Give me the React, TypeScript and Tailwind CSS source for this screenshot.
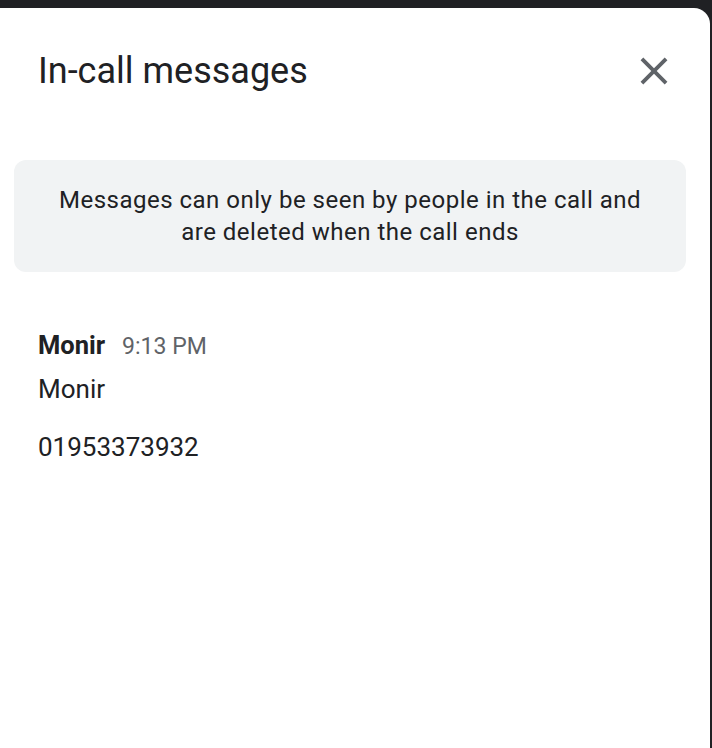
const CloseIcon = () => (
  <svg width="46" height="46" viewBox="0 0 24 24" fill="#5f6368">
    <path d="M19 6.41L17.59 5 12 10.59 6.41 5 5 6.41 10.59 12 5 17.59 6.41 19 12 13.41 17.59 19 19 17.59 13.41 12z" />
  </svg>
);

export default function App() {
  return (
    <div className="h-[748px] w-[712px] overflow-hidden bg-[#202124] pt-2 font-['Roboto',sans-serif]">
      <div className="flex h-[740px] w-[710px] flex-col rounded-tr-[16px] bg-white">
        {/* header */}
        <div className="flex h-[126px] items-center justify-between pl-[38px] pr-[33px]">
          <h1 className="text-[36px] leading-[44px] text-[#202124]">In-call messages</h1>
          <button className="flex items-center justify-center">
            <CloseIcon />
          </button>
        </div>

        <div className="ml-[14px] mr-[24px] mt-[26px] rounded-[12px] bg-[#f1f3f4] py-6 text-center text-[24px] leading-[32px] tracking-[0.5px] text-[#202124]">
          Messages can only be seen by people in the call and
          <br />
          are deleted when the call ends
        </div>

        {/* messages */}
        <div className="mt-[58px] px-[38px]">
          <div className="flex items-baseline gap-[17px] leading-[30px]">
            <span className="text-[25.5px] font-bold text-[#202124]">Monir</span>
            <span className="text-[23px] text-[#5f6368]">9:13 PM</span>
          </div>
          <p className="mt-[12px] text-[26px] leading-[30px] text-[#202124]">Monir</p>
          <p className="mt-[28px] text-[26px] leading-[30px] text-[#202124]">01953373932</p>
        </div>
      </div>
    </div>
  );
}
